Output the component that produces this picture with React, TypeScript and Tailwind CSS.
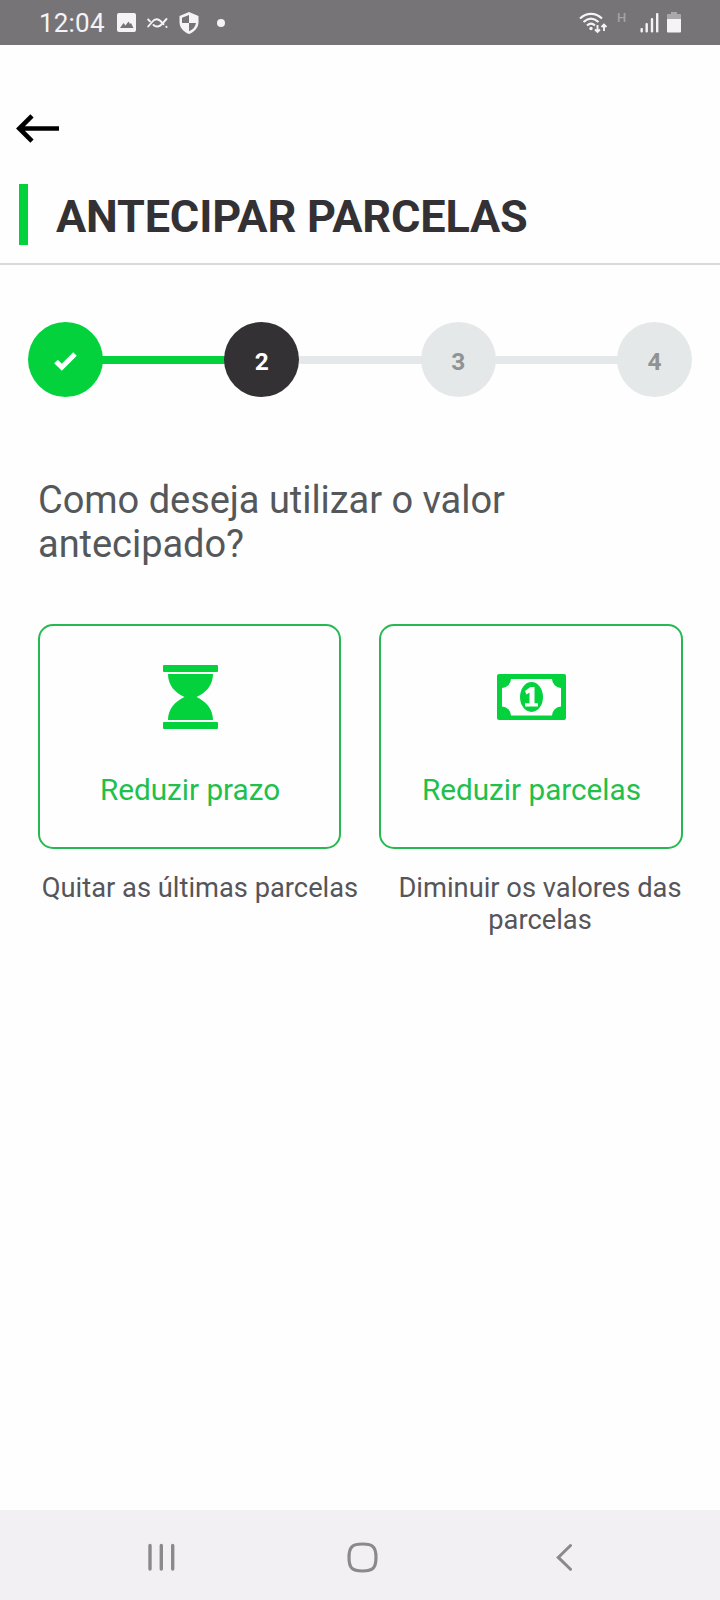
import React from "react";

type StepState = "done" | "current" | "pending";

const steps: { id: number; state: StepState }[] = [
  { id: 1, state: "done" },
  { id: 2, state: "current" },
  { id: 3, state: "pending" },
  { id: 4, state: "pending" },
];

const stepStyles: Record<StepState, string> = {
  done: "bg-[#03d23d] text-white",
  current: "bg-[#343135] text-white",
  pending: "bg-[#e5e8e9] text-[#8f9394]",
};

const HourglassIcon = () => (
  <svg width="55" height="64" viewBox="0 0 55 64" fill="#03d23d">
    <rect width="55" height="7" rx="1" />
    <rect y="57" width="55" height="7" rx="1" />
    <path d="M5 9H50C50 20 43 28 33.500 32C43 36.500 50 44 50 55H5C5 44 12 36.500 21.500 32C12 28 5 20 5 9Z" />
  </svg>
);

const MoneyIcon = () => (
  <svg width="69" height="46" viewBox="0 0 69 46">
    <rect width="69" height="46" rx="2" fill="#03d23d" />
    <path
      d="M14 5H55A9.200 9.200 0 0 0 64 14V32.500A9.200 9.200 0 0 0 55 41.500H14A9.200 9.200 0 0 0 5 32.500V14A9.200 9.200 0 0 0 14 5Z"
      fill="#fff"
    />
    <ellipse cx="34.500" cy="23" rx="11.500" ry="15" fill="#03d23d" />
    <path
      d="M28 17L33.500 13H37.500V29.300H41V32.500H28V29.300H32.500V18.500L29.500 20.500Z"
      fill="#fff"
    />
  </svg>
);

const StatusBar = () => (
  <header className="flex h-[45px] items-center bg-[#777477] px-[39px] text-[#f5f3f5]">
    <span className="w-[66px] text-[26px] leading-[30px] tracking-[0.2px] whitespace-nowrap">12:04</span>
    {/* Notificações */}
    <svg className="ml-3" width="19" height="19" viewBox="0 0 19 19">
      <rect width="19" height="19" rx="2" fill="currentColor" />
      <path d="M3 15L6.500 10L8.500 12.500L11.500 8.500L13 11L14 10L16.500 15Z" fill="#777477" />
    </svg>
    <svg
      className="ml-[11px]"
      width="21"
      height="12"
      viewBox="0 0 21 12"
      fill="none"
      stroke="currentColor"
      strokeWidth="1.900"
      strokeLinecap="round"
    >
      <path d="M1.200 2.500L3 4.300M6.500 8C9 10.500 12.500 9.800 15 7L19.500 2" />
      <path d="M1.200 9.500L5.500 4.500C8 1.500 11 1.500 13.500 4L16.500 7.200M19.300 9.800L19.600 10" />
    </svg>
    <svg className="ml-[11px]" width="20" height="22" viewBox="0 0 20 22">
      <path d="M10 0L19.500 4V10C19.500 15.500 15.500 20 10 22C4.500 20 .5 15.500 .5 10V4Z" fill="currentColor" />
      <path d="M10 3V11H17C16.500 14.500 14 17.800 10 19.300V11H3V5.700Z" fill="#777477" />
    </svg>
    <span className="ml-[18px] size-2 rounded-full bg-current" />
    {/* Conexão e bateria */}
    <svg
      className="ml-auto"
      width="28"
      height="22"
      viewBox="0 0 28 22"
      fill="none"
      stroke="currentColor"
      strokeWidth="2.200"
    >
      <path d="M1 6.500C7.500 .2 16.500 .2 23 6.500" />
      <path d="M4.500 10C9.500 5.500 14.500 5.500 19.500 10" />
      <path d="M8 13.500C10.500 11.200 13.500 11.200 16 13.500" />
      <circle cx="12" cy="16.500" r="1.700" fill="currentColor" stroke="none" />
      <path d="M18.500 13V20M16 17.500L18.500 20L21 17.500M25 19V12.500M22.500 15L25 12.500L27.500 15" strokeWidth="1.900" />
    </svg>
    <span className="ml-[10px] w-[11px] pb-[11px] text-[13px] leading-[13px] font-medium text-[#a5a2a5]">H</span>
    <svg className="ml-3" width="19" height="20" viewBox="0 0 19 20" fill="currentColor">
      <rect x="0.500" y="15" width="2.400" height="4.500" rx="1" />
      <rect x="5.500" y="10" width="2.400" height="9.500" rx="1" />
      <rect x="10.800" y="5" width="2.400" height="14.500" rx="1" />
      <rect x="16" y="0" width="2.400" height="19.500" rx="1" />
    </svg>
    <svg className="ml-2" width="14" height="21" viewBox="0 0 14 21">
      <path d="M4 0H10V2H13Q14 2 14 3V8H0V3Q0 2 1 2H4Z" fill="#aaa8aa" />
      <path d="M0 7H14V19.500Q14 20.500 13 20.500H1Q0 20.500 0 19.500Z" fill="currentColor" />
    </svg>
  </header>
);

const Stepper = () => (
  <div className="mt-[57px] flex items-center px-7">
    {steps.map((step, index) => (
      <React.Fragment key={step.id}>
        {index > 0 && (
          <div className={`-mx-px h-2 flex-1 ${index === 1 ? "bg-[#03d23d]" : "bg-[#e5e8e9]"}`} />
        )}
        <div
          className={`relative flex size-[75px] items-center justify-center rounded-full pt-[5px] text-[24.5px] leading-[30px] font-bold ${index === 1 ? "z-10" : ""} ${stepStyles[step.state]}`}
        >
          {step.state === "done" ? (
            <svg className="mb-0.5" width="23" height="19" viewBox="0 0 23 19" fill="none" stroke="currentColor" strokeWidth="5">
              <path d="M2 9.500L7.800 15.300L21 2" />
            </svg>
          ) : (
            step.id
          )}
        </div>
      </React.Fragment>
    ))}
  </div>
);

type OptionProps = {
  icon: React.ReactNode;
  label: string;
};

const OptionCard = ({ icon, label }: OptionProps) => (
  <button
    type="button"
    className="flex h-[225px] flex-col items-center rounded-[15px] border-2 border-[#27b951] pt-[39px]"
  >
    <div className="flex h-16 items-center pl-px">{icon}</div>
    <span className="mt-11 pl-px text-[29.7px] leading-[34px] whitespace-nowrap text-[#1fc04c]">{label}</span>
  </button>
);

const NavBar = () => (
  <nav className="mt-auto flex h-[90px] items-center bg-[#f2f0f3] pt-1 text-[#8b898b]">
    <svg className="ml-[148px]" width="27" height="28" viewBox="0 0 27 28" stroke="currentColor" strokeWidth="3.400" strokeLinecap="round">
      <path d="M2 2.500V26M13.300 2.500V26M24.700 2.500V26" />
    </svg>
    <svg className="ml-[172px]" width="31" height="31" viewBox="0 0 31 31" fill="none" stroke="currentColor" strokeWidth="3.200">
      <path d="M15.500 2C26 2 29 5 29 15.500S26 29 15.500 29S2 26 2 15.500S5 2 15.500 2Z" />
    </svg>
    <svg className="ml-[178px]" width="17" height="28" viewBox="0 0 17 28" fill="none" stroke="currentColor" strokeWidth="3" strokeLinecap="round">
      <path d="M14.500 2.500L2.300 14.400L14.500 26.300" />
    </svg>
  </nav>
);

const App: React.FC = () => {
  return (
    <div className="flex h-[1600px] w-[720px] flex-col bg-[#fefefe] font-[Roboto,sans-serif]">
      <StatusBar />

      {/* Voltar */}
      <button type="button" className="mt-[69px] ml-4 self-start" aria-label="Voltar">
        <svg width="43" height="29" viewBox="0 0 43 29" fill="none" stroke="#000" strokeWidth="4.600">
          <path d="M43 14.500H3M16 1.800L3.300 14.500L16 27.200" />
        </svg>
      </button>

      {/* Título */}
      <div className="mt-[41px] flex h-[81px] items-start border-b-2 border-[#dcd9de] pl-[19px]">
        <div className="h-[61px] w-[9px] bg-[#03d23d]" />
        <h1 className="ml-7 pt-[3px] text-[45px] leading-[60px] font-bold tracking-[-0.17px] whitespace-nowrap text-[#343135]">
          ANTECIPAR PARCELAS
        </h1>
      </div>

      <Stepper />

      <h2 className="mt-[81px] ml-[38px] w-[560px] text-[38px] leading-[44px] tracking-[-0.04px] text-[#55585a]">
        Como deseja utilizar o valor
        <br />
        antecipado?
      </h2>

      {/* Opções */}
      <div className="mt-[58px] grid grid-cols-[303px_304px] gap-[38px] pl-[38px]">
        <OptionCard icon={<HourglassIcon />} label="Reduzir prazo" />
        <OptionCard icon={<MoneyIcon />} label="Reduzir parcelas" />
      </div>
      <div className="mt-[23px] flex pl-[30px] text-center text-[27.3px] leading-8 text-[#55555a]">
        <p className="w-[340px]">Quitar as últimas parcelas</p>
        <p className="w-[340px]">
          Diminuir os valores das
          <br />
          parcelas
        </p>
      </div>

      <NavBar />
    </div>
  );
};

export default App;
